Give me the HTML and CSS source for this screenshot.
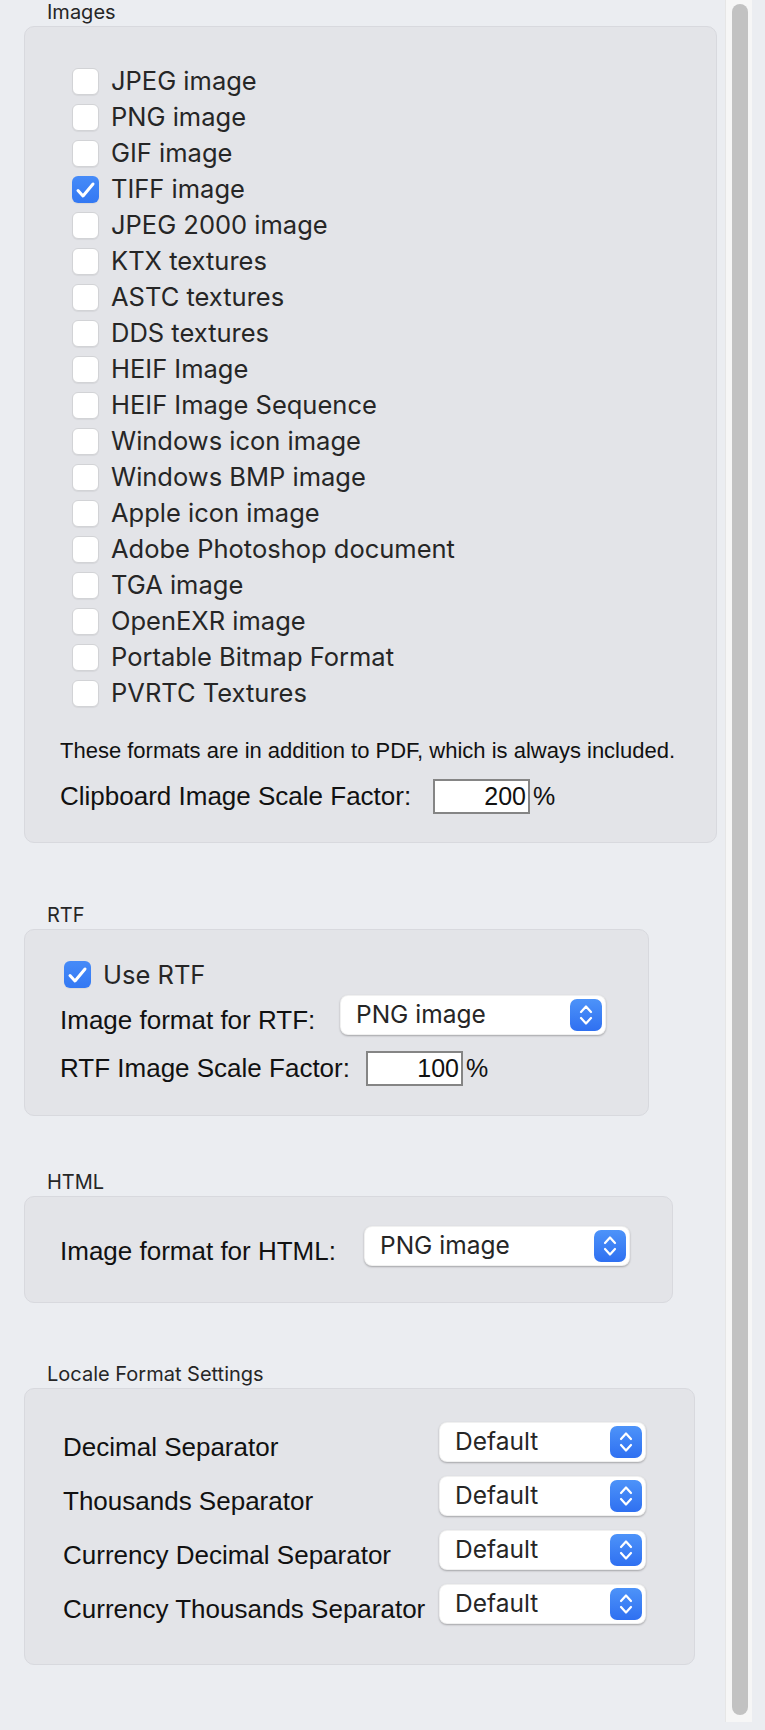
FILE: index.html
```html
<!DOCTYPE html>
<html lang="en">
<head>
<meta charset="utf-8">
<title>Export Settings</title>
<link rel="stylesheet" href="styles.css">
</head>
<body>
<div class="page">
  <main class="content">
    <section class="group group-images">
      <div class="group-title">Images</div>
      <div class="panel panel-images">
        <ul class="checklist">
          <li class="check-row"><span class="checkbox"></span><span class="check-label">JPEG image</span></li>
          <li class="check-row"><span class="checkbox"></span><span class="check-label">PNG image</span></li>
          <li class="check-row"><span class="checkbox"></span><span class="check-label">GIF image</span></li>
          <li class="check-row"><span class="checkbox checked"><svg viewBox="0 0 27 27"><path d="M6 14.5 L11 20 L21 8"/></svg></span><span class="check-label">TIFF image</span></li>
          <li class="check-row"><span class="checkbox"></span><span class="check-label">JPEG 2000 image</span></li>
          <li class="check-row"><span class="checkbox"></span><span class="check-label">KTX textures</span></li>
          <li class="check-row"><span class="checkbox"></span><span class="check-label">ASTC textures</span></li>
          <li class="check-row"><span class="checkbox"></span><span class="check-label">DDS textures</span></li>
          <li class="check-row"><span class="checkbox"></span><span class="check-label">HEIF Image</span></li>
          <li class="check-row"><span class="checkbox"></span><span class="check-label">HEIF Image Sequence</span></li>
          <li class="check-row"><span class="checkbox"></span><span class="check-label">Windows icon image</span></li>
          <li class="check-row"><span class="checkbox"></span><span class="check-label">Windows BMP image</span></li>
          <li class="check-row"><span class="checkbox"></span><span class="check-label">Apple icon image</span></li>
          <li class="check-row"><span class="checkbox"></span><span class="check-label">Adobe Photoshop document</span></li>
          <li class="check-row"><span class="checkbox"></span><span class="check-label">TGA image</span></li>
          <li class="check-row"><span class="checkbox"></span><span class="check-label">OpenEXR image</span></li>
          <li class="check-row"><span class="checkbox"></span><span class="check-label">Portable Bitmap Format</span></li>
          <li class="check-row"><span class="checkbox"></span><span class="check-label">PVRTC Textures</span></li>
        </ul>
        <p class="note">These formats are in addition to PDF, which is always included.</p>
        <div class="field-row">
          <span class="field-label w-clip">Clipboard Image Scale Factor:</span>
          <span class="num-input">200</span><span class="pct">%</span>
        </div>
      </div>
    </section>

    <section class="group group-rtf">
      <div class="group-title">RTF</div>
      <div class="panel panel-rtf">
        <div class="check-row single"><span class="checkbox checked"><svg viewBox="0 0 27 27"><path d="M6 14.5 L11 20 L21 8"/></svg></span><span class="check-label">Use RTF</span></div>
        <div class="select-row rtf-select">
          <span class="select-label w-rtf">Image format for RTF:</span>
          <div class="popup wide"><span class="popup-text">PNG image</span><span class="stepper"><svg viewBox="0 0 32 32"><path d="M11 13 L16 7.5 L21 13 M11 19 L16 24.5 L21 19"/></svg></span></div>
        </div>
        <div class="field-row rtf-scale">
          <span class="field-label w-rtfscale">RTF Image Scale Factor:</span>
          <span class="num-input">100</span><span class="pct">%</span>
        </div>
      </div>
    </section>

    <section class="group group-html">
      <div class="group-title">HTML</div>
      <div class="panel panel-html">
        <div class="select-row">
          <span class="select-label w-html">Image format for HTML:</span>
          <div class="popup wide"><span class="popup-text">PNG image</span><span class="stepper"><svg viewBox="0 0 32 32"><path d="M11 13 L16 7.5 L21 13 M11 19 L16 24.5 L21 19"/></svg></span></div>
        </div>
      </div>
    </section>

    <section class="group group-locale">
      <div class="group-title">Locale Format Settings</div>
      <div class="panel panel-locale">
        <div class="locale-grid">
          <span class="select-label">Decimal Separator</span>
          <div class="popup narrow"><span class="popup-text">Default</span><span class="stepper"><svg viewBox="0 0 32 32"><path d="M11 13 L16 7.5 L21 13 M11 19 L16 24.5 L21 19"/></svg></span></div>
          <span class="select-label">Thousands Separator</span>
          <div class="popup narrow"><span class="popup-text">Default</span><span class="stepper"><svg viewBox="0 0 32 32"><path d="M11 13 L16 7.5 L21 13 M11 19 L16 24.5 L21 19"/></svg></span></div>
          <span class="select-label">Currency Decimal Separator</span>
          <div class="popup narrow"><span class="popup-text">Default</span><span class="stepper"><svg viewBox="0 0 32 32"><path d="M11 13 L16 7.5 L21 13 M11 19 L16 24.5 L21 19"/></svg></span></div>
          <span class="select-label">Currency Thousands Separator</span>
          <div class="popup narrow"><span class="popup-text">Default</span><span class="stepper"><svg viewBox="0 0 32 32"><path d="M11 13 L16 7.5 L21 13 M11 19 L16 24.5 L21 19"/></svg></span></div>
        </div>
      </div>
    </section>
  </main>
  <div class="scrollbar"><div class="thumb"></div></div>
</div>
</body>
</html>
```

FILE: styles.css
```css
* { box-sizing: border-box; }

html, body {
  margin: 0;
  padding: 0;
  background: #ebedf1;
}

body {
  font-family: "Liberation Sans", Arial, sans-serif;
  color: #111;
}

.page {
  display: flex;
  align-items: flex-start;
  height: 1730px;
}

.content {
  width: 725px;
  flex: none;
}

/* group titles */
.group-title {
  font-family: Inter, "Noto Sans", sans-serif;
  font-size: 20px;
  line-height: 24px;
  height: 24px;
  margin-bottom: 2px;
  padding-left: 47px;
  color: #262626;
}

.group-rtf { margin-top: 60px; }
.group-html { margin-top: 54px; }
.group-locale { margin-top: 59px; }

.panel {
  margin-left: 24px;
  background: #e3e4e8;
  border: 1px solid #d8d9de;
  border-radius: 10px;
  padding-left: 35px;
}

.panel-images {
  width: 693px;
  padding-top: 36px;
  padding-bottom: 28px;
}

.panel-rtf {
  width: 625px;
  padding-top: 31px;
  padding-bottom: 29px;
}

.panel-html {
  width: 649px;
  padding-top: 29px;
  padding-bottom: 36px;
}

.panel-locale {
  width: 671px;
  padding-top: 33px;
  padding-bottom: 40px;
}

/* checkboxes */
.checklist {
  list-style: none;
  margin: 0 0 0 12px;
  padding: 0;
}

.check-row {
  display: flex;
  align-items: center;
  height: 36px;
}

.check-row.single {
  height: 27px;
  margin-left: 4px;
}

.checkbox {
  flex: none;
  width: 27px;
  height: 27px;
  border-radius: 6px;
  background: #fff;
  border: 1px solid #d2d3d6;
  box-shadow: 0 1px 1px rgba(0, 0, 0, 0.06);
  margin-right: 12px;
  display: flex;
}

.checkbox.checked {
  border: none;
  background: linear-gradient(#468bf8, #3378f3);
}

.checkbox svg {
  width: 27px;
  height: 27px;
}

.checkbox svg path {
  fill: none;
  stroke: #fff;
  stroke-width: 3;
  stroke-linecap: round;
  stroke-linejoin: round;
}

.check-label {
  font-family: Inter, "Noto Sans", sans-serif;
  font-size: 25.5px;
  line-height: 36px;
  color: #262626;
  white-space: nowrap;
}

/* note */
.note {
  margin: 27px 0 0 0;
  font-size: 22px;
  line-height: 26px;
  color: #111;
  white-space: nowrap;
}

/* numeric fields */
.field-row {
  display: flex;
  align-items: center;
  height: 35px;
  margin-top: 15px;
}

.rtf-scale { margin-top: 16px; }

.field-label {
  flex: none;
  font-size: 26px;
  line-height: 35px;
  color: #111;
  white-space: nowrap;
}

.w-clip { width: 373px; }
.w-rtfscale { width: 306px; }

.num-input {
  flex: none;
  width: 97px;
  height: 35px;
  background: #fff;
  border: 2px solid #858585;
  text-align: right;
  padding-right: 2px;
  font-size: 25px;
  line-height: 31px;
  color: #111;
}

.pct {
  margin-left: 3px;
  font-size: 25px;
  line-height: 35px;
  color: #111;
}

/* popups */
.select-row {
  display: flex;
  align-items: flex-end;
  height: 40px;
}

.rtf-select { margin-top: 7px; }

.select-label {
  flex: none;
  font-size: 26px;
  line-height: 30px;
  color: #111;
  white-space: nowrap;
}

.w-rtf { width: 280px; }
.w-html { width: 304px; }

.popup {
  flex: none;
  height: 40px;
  display: flex;
  align-items: center;
  justify-content: space-between;
  background: #fff;
  border-radius: 8px;
  border: 1px solid rgba(0, 0, 0, 0.06);
  box-shadow: 0 1px 2px rgba(0, 0, 0, 0.28);
  padding: 0 3px 0 15px;
}

.popup.wide { width: 266px; }
.popup.narrow { width: 207px; }

.popup-text {
  font-family: Inter, "Noto Sans", sans-serif;
  font-size: 24.5px;
  line-height: 38px;
  color: #262626;
  padding-bottom: 2px;
}

.stepper {
  flex: none;
  width: 32px;
  height: 32px;
  border-radius: 7px;
  background: linear-gradient(#4d93f9, #2f70f1);
  display: flex;
}

.stepper svg {
  width: 32px;
  height: 32px;
}

.stepper svg path {
  fill: none;
  stroke: #fff;
  stroke-width: 2.2;
  stroke-linecap: round;
  stroke-linejoin: round;
}

/* locale grid */
.locale-grid {
  display: grid;
  grid-template-columns: 376px 207px;
  grid-auto-rows: 40px;
  row-gap: 14px;
  margin-left: 3px;
}

.locale-grid .select-label {
  align-self: end;
}

/* scrollbar */
.scrollbar {
  flex: none;
  width: 27px;
  height: 1722px;
  background: #f6f6f6;
  border-left: 1px solid #e6e6e6;
  padding: 4px 4px 0 6px;
}

.thumb {
  width: 16px;
  height: 1711px;
  border-radius: 8px;
  background: #c2c2c2;
}
```
